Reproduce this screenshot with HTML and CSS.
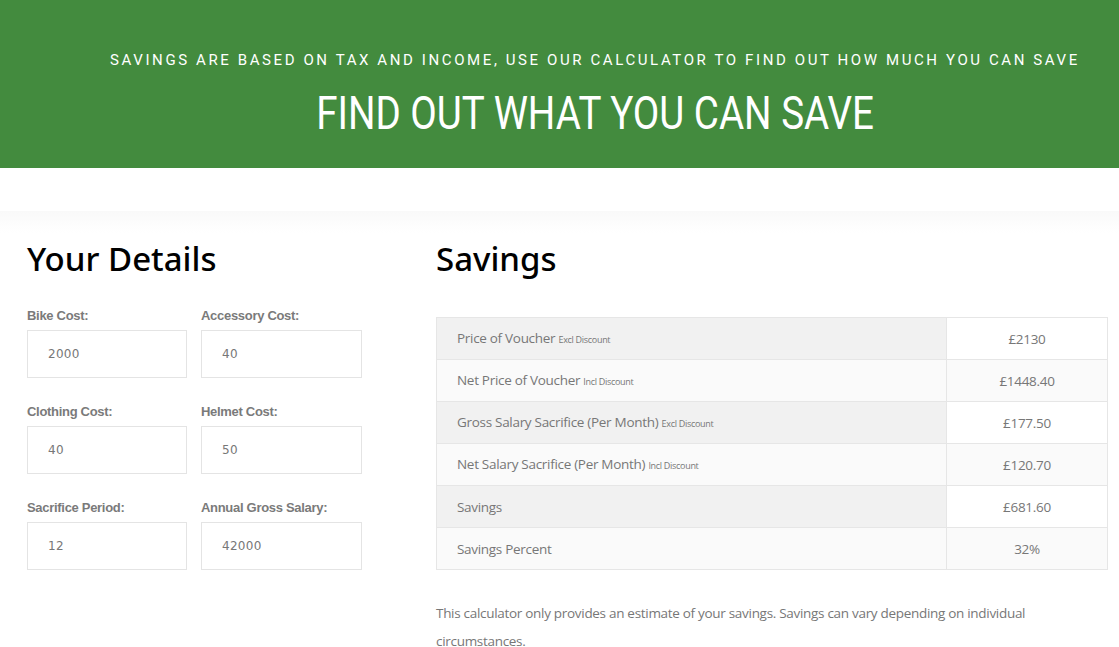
FILE: index.html
```html
<!DOCTYPE html>
<html lang="en">
<head>
    <meta charset="UTF-8">
    <meta name="viewport" content="width=device-width, initial-scale=1.0">
    <title>Find Out What You Can Save</title>
    <link rel="stylesheet" href="styles.css">
</head>
<body>
    <div class="banner">
        <p class="banner-sub">Savings are based on tax and income, use our calculator to find out how much you can save</p>
        <h1 class="banner-title"><span>FIND OUT WHAT YOU CAN SAVE</span></h1>
    </div>
    <div class="spacer"></div>

    <div class="calculator">
        <div class="details">
            <h2>Your Details</h2>
            <div class="fields">
                <label>Bike Cost:<input type="text" id="bikeCost" value="2000"></label>
                <label>Accessory Cost:<input type="text" id="accessoryCost" value="40"></label>
                <label>Clothing Cost:<input type="text" id="clothingCost" value="40"></label>
                <label>Helmet Cost:<input type="text" id="helmetCost" value="50"></label>
                <label>Sacrifice Period:<input type="text" id="period" value="12"></label>
                <label>Annual Gross Salary:<input type="text" id="salary" value="42000"></label>
            </div>
        </div>

        <div class="savings">
            <h2>Savings</h2>
            <table class="results">
                <tr>
                    <td>Price of Voucher <small>Excl Discount</small></td>
                    <td class="amount">£2130</td>
                </tr>
                <tr>
                    <td>Net Price of Voucher <small>Incl Discount</small></td>
                    <td class="amount">£1448.40</td>
                </tr>
                <tr>
                    <td>Gross Salary Sacrifice (Per Month) <small>Excl Discount</small></td>
                    <td class="amount">£177.50</td>
                </tr>
                <tr>
                    <td>Net Salary Sacrifice (Per Month) <small>Incl Discount</small></td>
                    <td class="amount">£120.70</td>
                </tr>
                <tr>
                    <td>Savings</td>
                    <td class="amount">£681.60</td>
                </tr>
                <tr>
                    <td>Savings Percent</td>
                    <td class="amount">32%</td>
                </tr>
            </table>
            <p class="note">This calculator only provides an estimate of your savings. Savings can vary depending on individual circumstances.</p>
        </div>
    </div>
</body>
</html>
```

FILE: styles.css
```css
body {
    margin: 0;
    font-family: "Open Sans", Arial, sans-serif;
    background: #fff;
    color: #777;
}
.banner {
    background: #438b3e;
    height: 168px;
    box-sizing: border-box;
    padding-top: 50px;
    text-align: center;
    color: #fff;
}
.banner-sub {
    margin: 0;
    padding-left: 110px;
    text-align: left;
    font-family: Roboto, sans-serif;
    font-size: 15px;
    letter-spacing: 2.6px;
    text-transform: uppercase;
    line-height: 20px;
}
.banner-title {
    margin: 15px 0 0;
    font-family: Roboto, sans-serif;
    font-weight: 400;
    font-size: 47px;
    line-height: 56px;
}
.banner-title span {
    display: inline-block;
    transform: scaleX(0.82);
    margin-left: 71px;
}
.spacer {
    height: 43px;
}
.calculator {
    display: flex;
    padding: 22px 11px 20px 27px;
    background: linear-gradient(#f9f9f9, #fff 22px);
}
h2 {
    margin: 0;
    font-family: "Noto Sans", "Open Sans", sans-serif;
    font-weight: 500;
    font-size: 33px;
    line-height: 52px;
    color: #000;
}
.details {
    width: 335px;
    margin-right: 74px;
}
.fields {
    display: grid;
    grid-template-columns: 160px 161px;
    column-gap: 14px;
    row-gap: 26px;
    margin-top: 23px;
}
label {
    display: block;
    font-family: "Liberation Sans", Arial, sans-serif;
    font-weight: bold;
    font-size: 13px;
    letter-spacing: -0.3px;
    color: #7a7a7a;
}
input {
    display: block;
    box-sizing: border-box;
    width: 100%;
    height: 48px;
    margin-top: 7px;
    padding: 0 20px;
    border: 1px solid #e4e4e4;
    font-family: "DejaVu Sans", Verdana, sans-serif;
    font-size: 12px;
    color: #777;
    letter-spacing: 0.3px;
    outline: none;
}
.savings {
    flex: 1;
}
.results {
    width: 672px;
    margin-top: 32px;
    border-collapse: collapse;
    font-size: 13.5px;
    line-height: 18px;
    letter-spacing: -0.3px;
}
.results td {
    height: 41px;
    padding: 0 20px;
    border: 1px solid #e6e6e6;
    background: #fafafa;
}
.results tr:nth-child(odd) td:first-child {
    background: #f1f1f1;
}
.results tr:nth-child(odd) td.amount {
    background: #fff;
}
.results td.amount {
    width: 120px;
    text-align: center;
}
.results small {
    font-size: 9px;
    letter-spacing: -0.3px;
}
.note {
    margin: 29px 0 0;
    width: 620px;
    font-size: 13.5px;
    line-height: 28px;
    letter-spacing: -0.3px;
}
```
